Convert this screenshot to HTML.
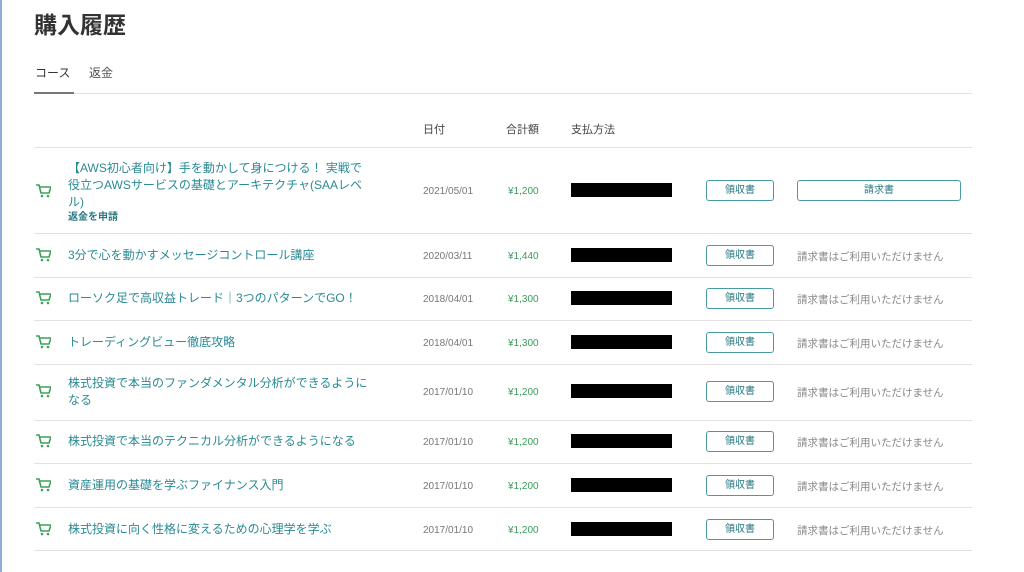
<html><head><style>
body{margin:0;width:1024px;height:572px;background:#fff;position:relative;overflow:hidden;font-family:"Liberation Sans","Noto Sans CJK JP",sans-serif;}
.a{position:absolute;white-space:nowrap}
.h{height:1px;background:#e2e2e2;left:34px;width:938px;position:absolute}
.t{color:#2a8a94;font-size:12px;line-height:17px;left:68px}
.d{color:#777;font-size:10px;left:423px;margin-top:2px}
.p{color:#3a9a5a;font-size:10px;left:508px;margin-top:2px}
.k{background:#000;left:571px;width:101px;height:14px}
.b{left:706px;width:66px;height:19px;border:1px solid #4a9aa4;border-radius:3px;font-size:10px;color:#2a7a84;text-align:center;line-height:20px}
.n{left:797px;font-size:10.5px;color:#888;margin-top:1px}
.c{left:35px;width:16px;height:16px}
</style></head><body>
<div class="a" style="left:0;top:0;width:2px;height:572px;background:#8ab0d8"></div>
<div class="a" style="left:34px;top:6px;font-size:23px;font-weight:bold;color:#333">購入履歴</div>
<div class="a" style="left:35px;top:64px;font-size:12px;color:#333">コース</div>
<div class="a" style="left:89px;top:64px;font-size:12px;color:#555">返金</div>
<div class="h" style="top:93px"></div>
<div class="a" style="left:34px;top:92px;width:40px;height:2px;background:#777"></div>
<div class="a" style="left:423px;top:121px;font-size:11px;color:#444">日付</div>
<div class="a" style="left:506px;top:121px;font-size:11px;color:#444">合計額</div>
<div class="a" style="left:571px;top:121px;font-size:11px;color:#444">支払方法</div>
<div class="h" style="top:147px"></div>
<svg width="0" height="0" style="position:absolute"><defs><g id="cart"><path d="M1 2h3l2 8h8l2-6H5" fill="none" stroke="#3aa35a" stroke-width="1.6"/><circle cx="7" cy="13" r="1.3" fill="#3aa35a"/><circle cx="13" cy="13" r="1.3" fill="#3aa35a"/></g></defs></svg>

<svg class="a c" style="top:183px"><use href="#cart"/></svg>
<div class="a t" style="top:160px">【AWS初心者向け】手を動かして身につける！ 実戦で<br>役立つAWSサービスの基礎とアーキテクチャ(SAAレベ<br>ル)</div>
<div class="a" style="left:68px;top:208px;font-size:10px;color:#2a7a84;font-weight:bold">返金を申請</div>
<div class="a d" style="top:184px">2021/05/01</div><div class="a p" style="top:184px">¥1,200</div>
<div class="a k" style="top:183px"></div>
<div class="a b" style="top:180px">領収書</div>
<div class="a b" style="top:180px;left:797px;width:162px">請求書</div>
<div class="h" style="top:233px"></div>

<svg class="a c" style="top:247px"><use href="#cart"/></svg>
<div class="a t" style="top:247px">3分で心を動かすメッセージコントロール講座</div>
<div class="a d" style="top:249px">2020/03/11</div><div class="a p" style="top:249px">¥1,440</div>
<div class="a k" style="top:248px"></div><div class="a b" style="top:245px">領収書</div>
<div class="a n" style="top:248px">請求書はご利用いただけません</div>
<div class="h" style="top:277px"></div>

<svg class="a c" style="top:290px"><use href="#cart"/></svg>
<div class="a t" style="top:290px">ローソク足で高収益トレード｜3つのパターンでGO！</div>
<div class="a d" style="top:292px">2018/04/01</div><div class="a p" style="top:292px">¥1,300</div>
<div class="a k" style="top:291px"></div><div class="a b" style="top:288px">領収書</div>
<div class="a n" style="top:291px">請求書はご利用いただけません</div>
<div class="h" style="top:320px"></div>

<svg class="a c" style="top:334px"><use href="#cart"/></svg>
<div class="a t" style="top:334px">トレーディングビュー徹底攻略</div>
<div class="a d" style="top:336px">2018/04/01</div><div class="a p" style="top:336px">¥1,300</div>
<div class="a k" style="top:335px"></div><div class="a b" style="top:332px">領収書</div>
<div class="a n" style="top:335px">請求書はご利用いただけません</div>
<div class="h" style="top:364px"></div>

<svg class="a c" style="top:383px"><use href="#cart"/></svg>
<div class="a t" style="top:375px">株式投資で本当のファンダメンタル分析ができるように<br>なる</div>
<div class="a d" style="top:385px">2017/01/10</div><div class="a p" style="top:385px">¥1,200</div>
<div class="a k" style="top:384px"></div><div class="a b" style="top:381px">領収書</div>
<div class="a n" style="top:384px">請求書はご利用いただけません</div>
<div class="h" style="top:420px"></div>

<svg class="a c" style="top:433px"><use href="#cart"/></svg>
<div class="a t" style="top:433px">株式投資で本当のテクニカル分析ができるようになる</div>
<div class="a d" style="top:435px">2017/01/10</div><div class="a p" style="top:435px">¥1,200</div>
<div class="a k" style="top:434px"></div><div class="a b" style="top:431px">領収書</div>
<div class="a n" style="top:434px">請求書はご利用いただけません</div>
<div class="h" style="top:463px"></div>

<svg class="a c" style="top:477px"><use href="#cart"/></svg>
<div class="a t" style="top:477px">資産運用の基礎を学ぶファイナンス入門</div>
<div class="a d" style="top:479px">2017/01/10</div><div class="a p" style="top:479px">¥1,200</div>
<div class="a k" style="top:478px"></div><div class="a b" style="top:475px">領収書</div>
<div class="a n" style="top:478px">請求書はご利用いただけません</div>
<div class="h" style="top:507px"></div>

<svg class="a c" style="top:521px"><use href="#cart"/></svg>
<div class="a t" style="top:521px">株式投資に向く性格に変えるための心理学を学ぶ</div>
<div class="a d" style="top:523px">2017/01/10</div><div class="a p" style="top:523px">¥1,200</div>
<div class="a k" style="top:522px"></div><div class="a b" style="top:519px">領収書</div>
<div class="a n" style="top:522px">請求書はご利用いただけません</div>
<div class="h" style="top:550px"></div>
</body></html>
